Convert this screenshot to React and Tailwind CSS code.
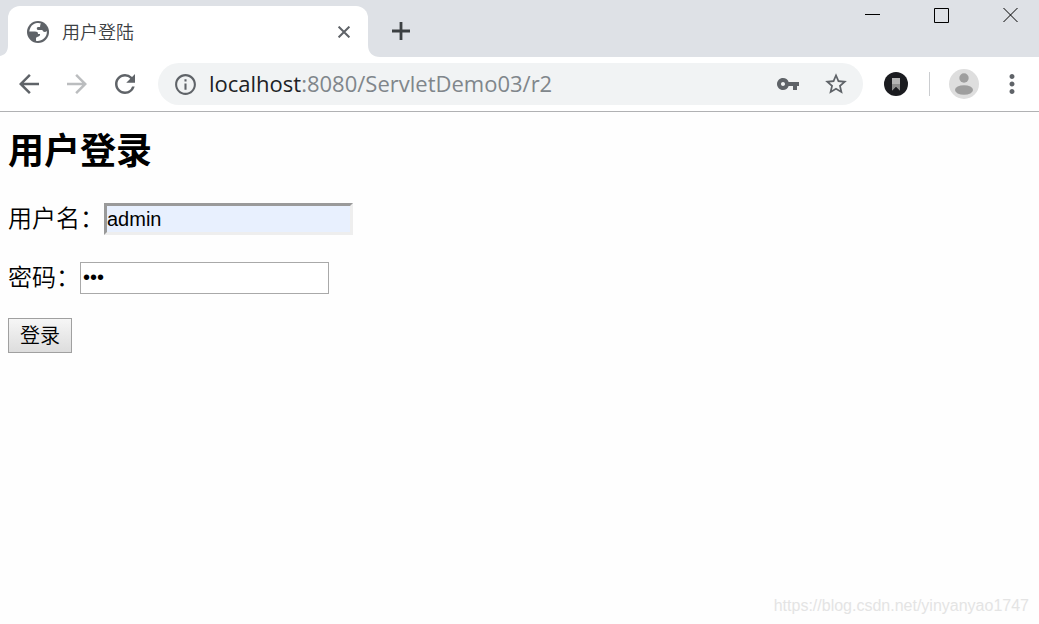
import React from "react";
import {
  MdArrowBack,
  MdArrowForward,
  MdRefresh,
  MdInfoOutline,
  MdVpnKey,
  MdStarBorder,
  MdMoreVert,
} from "react-icons/md";

function GlobeIcon() {
  return (
    <svg width="22" height="22" viewBox="0 0 22 22" aria-hidden="true" className="shrink-0">
      <circle cx="11" cy="11" r="11" fill="#5f6368" />
      <path
        d="M14 2.4A9 9 0 0 0 2.3 10.6H8C10 10.6 11 11.4 11 13H13C13.6 15.6 10 15.8 9 16.8V19.7A9 9 0 0 0 19.8 10C18.6 11.4 16 11.4 15.4 9H11C9.4 8.6 9.4 6.4 11 6H13C13.4 5 12.8 4 14 2.4Z"
        fill="#fff"
      />
    </svg>
  );
}

function BookmarkBadge() {
  return (
    <svg width="24" height="24" viewBox="0 0 24 24" aria-hidden="true">
      <circle cx="12" cy="12" r="12" fill="#1b1c20" />
      <path d="M8 6h8v12.5l-4-4-4 4z" fill="#b5b5b5" />
      <path d="M8 12h8v6.5l-4-4-4 4z" fill="#8f8f8f" />
    </svg>
  );
}

function Avatar() {
  return (
    <svg width="30" height="30" viewBox="0 0 30 30" aria-hidden="true">
      <circle cx="15" cy="15" r="15" fill="#dedede" />
      <circle cx="15" cy="9" r="4.7" fill="#9e9e9e" />
      <ellipse cx="15" cy="21" rx="9" ry="4.8" fill="#9e9e9e" />
    </svg>
  );
}

function TabStrip() {
  return (
    <header className="flex h-[57px] items-end bg-[#dee1e6]">
      <svg width="8" height="12" viewBox="0 0 8 12" aria-hidden="true" className="shrink-0">
        <path d="M8 0v12H0v-1C5 10 8 7 8 0z" fill="#fff" />
      </svg>
      <div className="flex h-[51px] w-[360px] items-center rounded-t-xl bg-white pr-4 pl-[19px]">
        <GlobeIcon />
        <span className="ml-[13px] flex-1 pt-0.5 text-lg font-[350] text-[#3c4043]">用户登陆</span>
        <button aria-label="Close tab" className="flex size-4 items-center justify-center">
          <svg width="12" height="12" viewBox="0 0 12 12" aria-hidden="true">
            <path d="M.6 .6l10.8 10.8M11.4 .6L.6 11.4" stroke="#5f6368" strokeWidth="2" />
          </svg>
        </button>
      </div>
      <svg width="12" height="12" viewBox="0 0 12 12" aria-hidden="true" className="shrink-0">
        <path d="M0 0v12h12C5 12 0 8 0 0z" fill="#fff" />
      </svg>
      <button aria-label="New tab" className="mb-4 ml-[9px] flex h-5 w-6 items-center justify-center">
        <svg width="18" height="18" viewBox="0 0 18 18" aria-hidden="true">
          <path d="M9 0v18M0 9h18" stroke="#3c4043" strokeWidth="2.8" />
        </svg>
      </button>
      <div className="ml-auto flex h-full gap-[53px] pt-[7px] pr-5">
        <button aria-label="Minimize" className="size-4">
          <svg width="16" height="16" viewBox="0 0 16 16" aria-hidden="true">
            <path d="M0 7.5h15" stroke="#000" />
          </svg>
        </button>
        <button aria-label="Maximize" className="size-4">
          <svg width="16" height="16" viewBox="0 0 16 16" aria-hidden="true">
            <path d="M.5 1.5h14v14H.5z" stroke="#000" fill="none" />
          </svg>
        </button>
        <button aria-label="Close window" className="size-4">
          <svg width="16" height="16" viewBox="0 0 16 16" aria-hidden="true">
            <path d="M.5 1l14 14M14.5 1l-14 14" stroke="#000" />
          </svg>
        </button>
      </div>
    </header>
  );
}

function Toolbar() {
  return (
    <nav className="flex h-[55px] items-center border-b border-[#b0b1b3] bg-white pr-3 pl-3.5 text-[#5f6368]">
      <button aria-label="Back" className="size-[30px]">
        <MdArrowBack size={30} />
      </button>
      <button aria-label="Forward" disabled className="ml-[18px] size-[30px] text-[#bbbdbf]">
        <MdArrowForward size={30} />
      </button>
      <button aria-label="Reload" className="ml-[18px] size-[30px]">
        <MdRefresh size={30} />
      </button>
      <div className="ml-[18px] flex h-[42px] min-w-0 flex-1 items-center rounded-full bg-[#f1f3f4] pr-3.5 pl-[15px]">
        <MdInfoOutline size={25} className="shrink-0" />
        <p className="ml-[11px] flex-1 truncate pb-0.5 font-['Open_Sans','Noto_Sans',sans-serif] text-[22px] text-[#80868b]">
          <span className="text-[#202124]">localhost</span>:8080/ServletDemo03/r2
        </p>
        <button aria-label="Passwords" className="size-6">
          <MdVpnKey size={24} />
        </button>
        <button aria-label="Bookmark this page" className="ml-[23px] size-[26px]">
          <MdStarBorder size={26} />
        </button>
      </div>
      <button aria-label="Extension" className="ml-[21px] size-6">
        <BookmarkBadge />
      </button>
      <div className="ml-[21px] h-6 w-px bg-[#cbcdd0]" />
      <button aria-label="Profile" className="ml-[19px] size-[30px]">
        <Avatar />
      </button>
      <button aria-label="Menu" className="ml-[18px] size-[30px]">
        <MdMoreVert size={30} />
      </button>
    </nav>
  );
}

export default function App() {
  return (
    <div className="flex min-h-screen flex-col bg-[#fefefe] font-['Liberation_Sans','Noto_Sans_CJK_SC',sans-serif] text-black">
      <TabStrip />
      <Toolbar />
      <main className="flex-1 px-2 pt-[18px]">
        <h2 className="text-4xl leading-[44px] font-bold">用户登录</h2>
        <form className="mt-[29px] text-2xl font-[350]" onSubmit={(e) => e.preventDefault()}>
          <div className="flex h-8 items-center">
            <label htmlFor="username">用户名：</label>
            <input
              id="username"
              type="text"
              defaultValue="admin"
              className="h-8 w-[249px] border-[3px] border-t-[#9a9a9a] border-r-[#eeeeee] border-b-[#eeeeee] border-l-[#9a9a9a] bg-[#e8f0fe] text-xl outline-none"
            />
          </div>
          <div className="mt-[27px] flex h-8 items-center">
            <label htmlFor="password">密码：</label>
            <input
              id="password"
              type="password"
              defaultValue="123"
              className="h-8 w-[249px] border border-[#a9a9a9] bg-white px-0.5 pb-0.5 text-xl outline-none"
            />
          </div>
          <button
            type="submit"
            className="mt-6 flex h-[35px] w-16 items-center justify-center border border-[#a0a0a0] bg-linear-to-b from-[#f6f6f6] to-[#dddddd] text-xl"
          >
            登录
          </button>
        </form>
      </main>
      <footer className="px-2.5 pb-1.5 text-right text-base text-[#e4e4e4]">
        https://blog.csdn.net/yinyanyao1747
      </footer>
    </div>
  );
}
